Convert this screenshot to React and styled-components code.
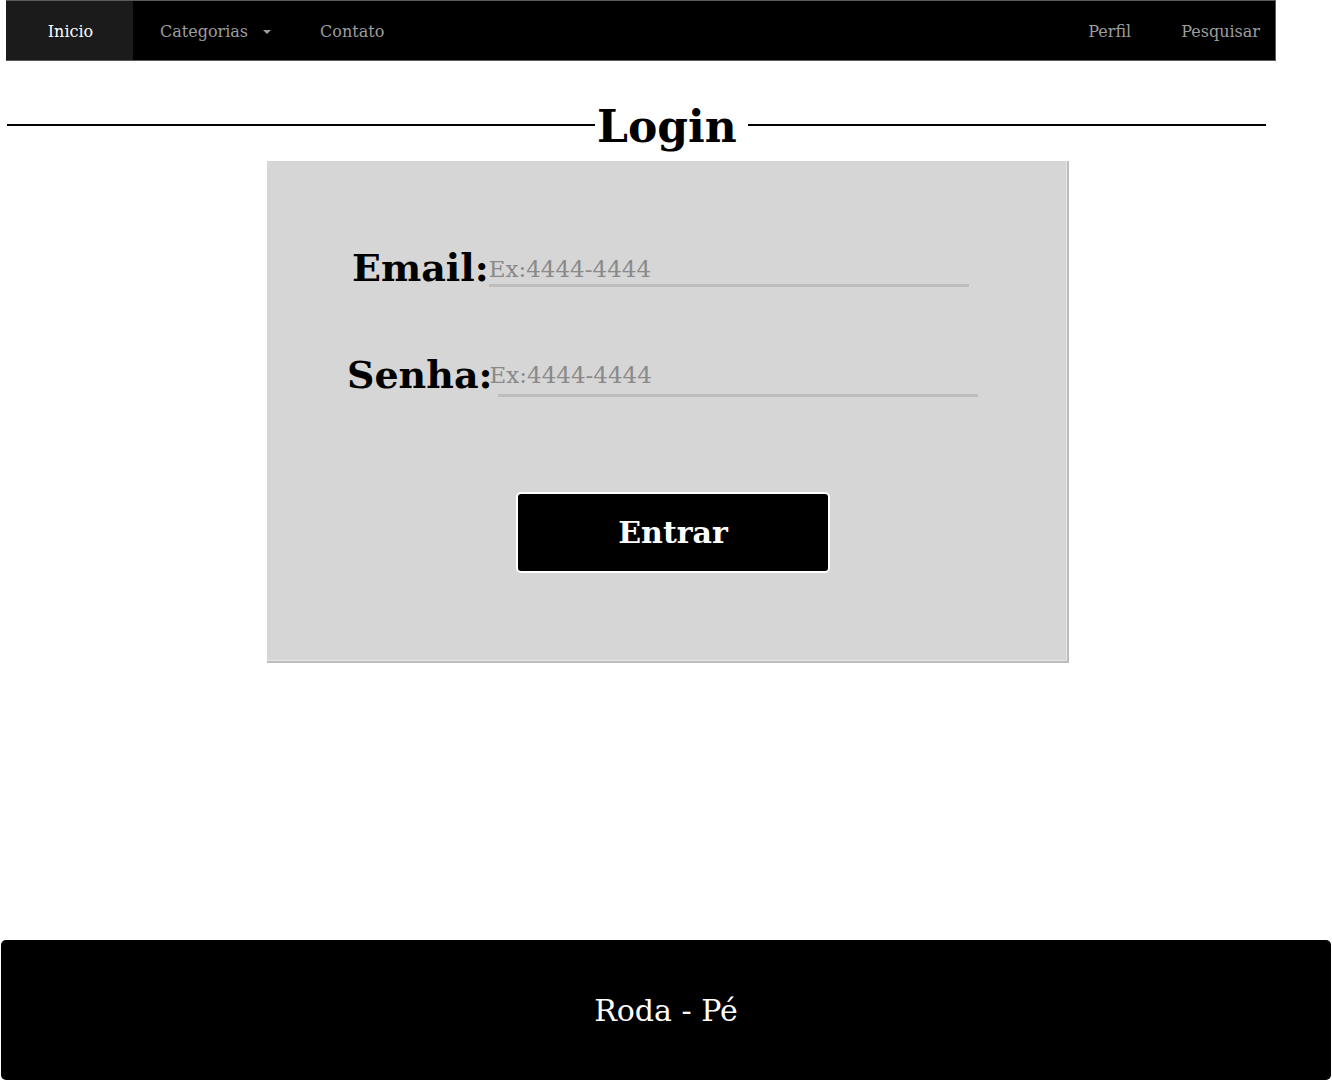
import React from 'react';
import styled, { createGlobalStyle } from 'styled-components';

const GlobalStyle = createGlobalStyle`
  html, body {
    margin: 0;
    padding: 0;
    background: #ffffff;
    font-family: "DejaVu Serif", "Liberation Serif", serif;
  }
  * {
    box-sizing: border-box;
  }
`;

const Page = styled.div`
  min-height: 100vh;
  display: flex;
  flex-direction: column;
`;

// Top navigation bar
const NavBar = styled.nav`
  display: flex;
  align-items: stretch;
  height: 61px;
  margin: 0 56px 0 6px;
  background-color: #000;
  border: 1px solid #5a5a5a;
  border-left: none;
`;

const NavGroup = styled.div`
  display: flex;
  align-items: stretch;
  margin-left: ${(p) => (p.right ? 'auto' : '0')};
`;

const NavLink = styled.a`
  display: flex;
  align-items: center;
  justify-content: center;
  gap: 15px;
  width: ${(p) => (p.width ? `${p.width}px` : 'auto')};
  padding: ${(p) => (p.width ? '2px 0 0 2px' : '2px 25px 0')};
  font-size: 16px;
  color: ${(p) => (p.active ? '#ffffff' : '#9d9d9d')};
  background-color: ${(p) => (p.active ? '#1b1b1b' : 'transparent')};
  text-decoration: none;
  cursor: pointer;
`;

const Caret = styled.span`
  width: 0;
  height: 0;
  border-left: 4px solid transparent;
  border-right: 4px solid transparent;
  border-top: 4px solid #9d9d9d;
`;

// Section title with rules on both sides
const TitleRow = styled.div`
  display: flex;
  align-items: center;
  margin: 34px 66px 0 7px;
`;

const Rule = styled.span`
  flex: ${(p) => (p.size ? `0 0 ${p.size}px` : '1')};
  height: 2px;
  background-color: #000;
`;

const Title = styled.h1`
  margin: 0 11px 0 2px;
  padding-top: 4px;
  font-size: 44px;
  font-weight: bold;
  line-height: 56px;
  color: #000;
`;

// Login card
const Card = styled.form`
  width: 802px;
  height: 502px;
  margin: 6px auto 0 267px;
  padding-top: 85px;
  background-color: #d6d6d6;
  box-shadow: inset -1px -1px 0 #e4e4e4;
  border-right: 2px solid #bdbdbd;
  border-bottom: 2px solid #bdbdbd;
  display: flex;
  flex-direction: column;
`;

const Field = styled.div`
  display: flex;
  align-items: flex-start;
  padding-left: ${(p) => p.indent}px;
  margin-top: ${(p) => p.gap}px;
`;

const Label = styled.label`
  font-size: 38px;
  font-weight: bold;
  color: #000;
  line-height: 44px;
`;

const InputBox = styled.div`
  display: flex;
  flex-direction: column;
  margin-top: ${(p) => p.top}px;
  margin-left: ${(p) => p.shift}px;
`;

const Input = styled.input`
  width: 480px;
  height: ${(p) => p.h}px;
  padding: 0;
  border: none;
  outline: none;
  background: transparent;
  font-family: "DejaVu Serif", "Liberation Serif", serif;
  font-size: 23px;
  color: #333;

  &::placeholder {
    color: #8a8a8a;
  }
`;

const Underline = styled.div`
  width: 480px;
  height: 3px;
  margin-left: ${(p) => p.offset}px;
  background-color: #bdbdbd;
`;

const Submit = styled.button`
  width: 314px;
  height: 81px;
  margin: 95px 0 0 249px;
  background-color: #000;
  border: 2px solid #ffffff;
  border-radius: 5px;
  color: #ffffff;
  font-family: "DejaVu Serif", "Liberation Serif", serif;
  font-size: 30px;
  font-weight: bold;
  cursor: pointer;
`;

const Footer = styled.footer`
  margin: auto 1px 1px 1px;
  height: 140px;
  display: flex;
  align-items: center;
  justify-content: center;
  background-color: #000;
  border-radius: 5px;
  color: #ffffff;
  font-size: 30px;
`;

const App = () => {
  return (
    <Page>
      <GlobalStyle />
      <NavBar>
        <NavGroup>
          <NavLink active width={127}>Inicio</NavLink>
          <NavLink style={{ paddingLeft: 27 }}>
            Categorias <Caret />
          </NavLink>
          <NavLink style={{ paddingLeft: 24 }}>Contato</NavLink>
        </NavGroup>
        <NavGroup right>
          <NavLink>Perfil</NavLink>
          <NavLink style={{ paddingRight: 15 }}>Pesquisar</NavLink>
        </NavGroup>
      </NavBar>

      <TitleRow>
        <Rule size={588} />
        <Title>Login</Title>
        <Rule />
      </TitleRow>

      <Card onSubmit={(e) => e.preventDefault()}>
        <Field indent={85} gap={0}>
          <Label htmlFor="email">Email:</Label>
          <InputBox top={8} shift={0}>
            <Input id="email" h={30} placeholder="Ex:4444-4444" />
            <Underline offset={0} />
          </InputBox>
        </Field>

        <Field indent={80} gap={63}>
          <Label htmlFor="senha">Senha:</Label>
          <InputBox top={3} shift={-3}>
            <Input id="senha" type="password" h={38} placeholder="Ex:4444-4444" />
            <Underline offset={8} />
          </InputBox>
        </Field>

        <Submit type="submit">Entrar</Submit>
      </Card>

      <Footer>Roda - Pé</Footer>
    </Page>
  );
};

export default App;
